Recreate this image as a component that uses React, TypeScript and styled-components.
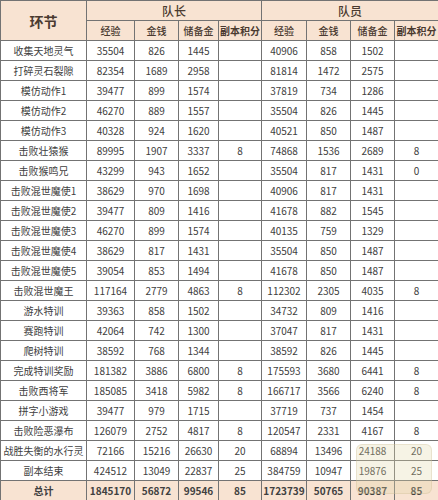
import React, { FC } from 'react';
import styled, { createGlobalStyle } from 'styled-components';

const GlobalStyle = createGlobalStyle`
  html, body {
    margin: 0;
    padding: 0;
    background: #ffffff;
  }
  body {
    font-family: 'Noto Sans CJK SC', 'Noto Sans', sans-serif;
    color: #404040;
  }
`;

const Wrap = styled.div`
  position: relative;
  width: 438px;
  height: 500px;
  overflow: hidden;
`;

const Table = styled.table`
  width: 438px;
  border-collapse: collapse;
  table-layout: fixed;
  font-size: 10px;
`;

const Row = styled.tr<{ $total?: boolean }>`
  height: 20px;
  background: ${(p) => (p.$total ? '#f8e3d2' : '#ffffff')};
  font-weight: ${(p) => (p.$total ? 700 : 400)};
`;

const HeadRow = styled.tr`
  height: 20px;
  background: #f8e3d2;
`;

const Cell = styled.td`
  border: 1px solid #737373;
  text-align: center;
  padding: 0;
  line-height: 18px;
  white-space: nowrap;
  overflow: hidden;
`;

const HeadCell = styled.th<{ $size?: number; $bold?: boolean }>`
  border: 1px solid #737373;
  text-align: center;
  padding: 0;
  font-size: ${(p) => p.$size || 10}px;
  font-weight: ${(p) => (p.$bold ? 700 : 500)};
  color: #4a3a30;
  white-space: nowrap;
`;

const Watermark = styled.div`
  position: absolute;
  left: 356px;
  top: 444px;
  width: 74px;
  height: 48px;
  border-radius: 6px;
  background: rgba(226, 214, 170, 0.3);
  border: 1px solid rgba(190, 175, 130, 0.25);
`;

const widths = [86, 48, 44, 40, 43, 45, 44, 44, 44];

type Rec = [string, string, string, string, string, string, string, string, string];

const rows: Rec[] = [
  ['收集天地灵气', '35504', '826', '1445', '', '40906', '858', '1502', ''],
  ['打碎灵石裂隙', '82354', '1689', '2958', '', '81814', '1472', '2575', ''],
  ['模仿动作1', '39477', '899', '1574', '', '37819', '734', '1286', ''],
  ['模仿动作2', '46270', '889', '1557', '', '35504', '826', '1445', ''],
  ['模仿动作3', '40328', '924', '1620', '', '40521', '850', '1487', ''],
  ['击败壮猿猴', '89995', '1907', '3337', '8', '74868', '1536', '2689', '8'],
  ['击败猴鸣兄', '43299', '943', '1652', '', '35504', '817', '1431', '0'],
  ['击败混世魔使1', '38629', '970', '1698', '', '40906', '817', '1431', ''],
  ['击败混世魔使2', '39477', '809', '1416', '', '41678', '882', '1545', ''],
  ['击败混世魔使3', '46270', '899', '1574', '', '40135', '759', '1329', ''],
  ['击败混世魔使4', '38629', '817', '1431', '', '35504', '850', '1487', ''],
  ['击败混世魔使5', '39054', '853', '1494', '', '41678', '850', '1487', ''],
  ['击败混世魔王', '117164', '2779', '4863', '8', '112302', '2305', '4035', '8'],
  ['游水特训', '39363', '858', '1502', '', '34732', '809', '1416', ''],
  ['赛跑特训', '42064', '742', '1300', '', '37047', '817', '1431', ''],
  ['爬树特训', '38592', '768', '1344', '', '38592', '826', '1445', ''],
  ['完成特训奖励', '181382', '3886', '6800', '8', '175593', '3680', '6441', '8'],
  ['击败西将军', '185085', '3418', '5982', '8', '166717', '3566', '6240', '8'],
  ['拼字小游戏', '39477', '979', '1715', '', '37719', '737', '1454', ''],
  ['击败险恶瀑布', '126079', '2752', '4817', '8', '120547', '2331', '4167', '8'],
  ['战胜失衡的水行灵', '72166', '15216', '26630', '20', '68894', '13496', '24188', '20'],
  ['副本结束', '424512', '13049', '22837', '25', '384759', '10947', '19876', '25'],
];

const total: Rec = ['总计', '1845170', '56872', '99546', '85', '1723739', '50765', '90387', '85'];

const sub = ['经验', '金钱', '储备金', '副本积分'];

const App: FC = () => {
  return (
    <Wrap>
      <GlobalStyle />
      <Table>
        <colgroup>
          {widths.map((w, i) => (
            <col key={i} style={{ width: w }} />
          ))}
        </colgroup>
        <thead>
          <HeadRow>
            <HeadCell rowSpan={2} $size={14} $bold>
              环节
            </HeadCell>
            <HeadCell colSpan={4} $size={12}>
              队长
            </HeadCell>
            <HeadCell colSpan={4} $size={12}>
              队员
            </HeadCell>
          </HeadRow>
          <HeadRow>
            {[...sub, ...sub].map((s, i) => (
              <HeadCell key={i} $bold={s === '副本积分'}>
                {s}
              </HeadCell>
            ))}
          </HeadRow>
        </thead>
        <tbody>
          {rows.map((r, i) => (
            <Row key={i}>
              {r.map((v, j) => (
                <Cell key={j}>{v}</Cell>
              ))}
            </Row>
          ))}
          <Row $total>
            {total.map((v, j) => (
              <Cell key={j}>{v}</Cell>
            ))}
          </Row>
        </tbody>
      </Table>
      <Watermark />
    </Wrap>
  );
};

export default App;
